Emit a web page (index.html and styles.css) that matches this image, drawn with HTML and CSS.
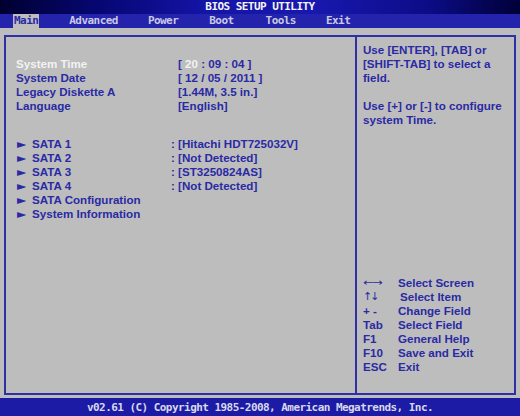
FILE: index.html
```html
<!DOCTYPE html>
<html>
<head>
<meta charset="utf-8">
<link rel="stylesheet" href="styles.css">
</head>
<body>
<div class="screen">
  <header class="title">BIOS SETUP UTILITY</header>
  <nav class="menu">
    <span class="tab tab-main active">Main</span>
    <span class="tab tab-adv">Advanced</span>
    <span class="tab tab-power">Power</span>
    <span class="tab tab-boot">Boot</span>
    <span class="tab tab-tools">Tools</span>
    <span class="tab tab-exit">Exit</span>
  </nav>
  <main class="area">
    <div class="box">
      <section class="left">
        <div class="group">
          <div class="row"><span class="label white">System Time</span><span class="val">[ <span class="white">20</span> : 09 : 04 ]</span></div>
          <div class="row"><span class="label">System Date</span><span class="val">[ 12 / 05 / 2011 ]</span></div>
          <div class="row"><span class="label">Legacy Diskette A</span><span class="val">[1.44M, 3.5 in.]</span></div>
          <div class="row"><span class="label">Language</span><span class="val">[English]</span></div>
        </div>
        <div class="group group2">
          <div class="row"><span class="label2"><span class="arr">►</span>SATA 1</span><span class="val">: [Hitachi HDT725032V]</span></div>
          <div class="row"><span class="label2"><span class="arr">►</span>SATA 2</span><span class="val">: [Not Detected]</span></div>
          <div class="row"><span class="label2"><span class="arr">►</span>SATA 3</span><span class="val">: [ST3250824AS]</span></div>
          <div class="row"><span class="label2"><span class="arr">►</span>SATA 4</span><span class="val">: [Not Detected]</span></div>
          <div class="row"><span class="label2"><span class="arr">►</span>SATA Configuration</span></div>
          <div class="row"><span class="label2"><span class="arr">►</span>System Information</span></div>
        </div>
      </section>
      <aside class="right">
        <div class="help">
          <p>Use [ENTER], [TAB] or<br>[SHIFT-TAB] to select a<br>field.</p>
          <p>Use [+] or [-] to configure<br>system Time.</p>
        </div>
        <div class="legend">
          <div class="lrow"><span class="key arrows">←→</span><span>Select Screen</span></div>
          <div class="lrow"><span class="key arrows2">↑↓</span><span class="ind">Select Item</span></div>
          <div class="lrow"><span class="key">+ -</span><span>Change Field</span></div>
          <div class="lrow"><span class="key">Tab</span><span>Select Field</span></div>
          <div class="lrow"><span class="key">F1</span><span>General Help</span></div>
          <div class="lrow"><span class="key">F10</span><span>Save and Exit</span></div>
          <div class="lrow"><span class="key">ESC</span><span>Exit</span></div>
        </div>
      </aside>
    </div>
  </main>
  <footer class="foot">v02.61 (C) Copyright 1985-2008, American Megatrends, Inc.</footer>
</div>
</body>
</html>
```
FILE: styles.css
```css
html, body {
  margin: 0;
  padding: 0;
  background: #bdbdbd;
}
.screen {
  width: 520px;
  height: 416px;
  display: flex;
  flex-direction: column;
  overflow: hidden;
}
.title {
  height: 14px;
  line-height: 14px;
  text-align: center;
  color: #f4f4f4;
  font-family: "DejaVu Sans Mono", monospace;
  font-weight: bold;
  font-size: 11px;
  letter-spacing: -0.55px;
  background: linear-gradient(to right, #000030 0%, #060670 18%, #1414a8 40%, #1818b0 60%, #0c0c88 82%, #000038 100%);
}
.menu {
  height: 14px;
  background: #2323ab;
  display: flex;
  font-family: "DejaVu Sans Mono", monospace;
  font-weight: bold;
  font-size: 11px;
  letter-spacing: -0.55px;
  line-height: 14px;
  color: #c9c9e6;
}
.tab { display: block; }
.tab-main { margin-left: 13px; padding: 0 1px; }
.tab-adv { margin-left: 30px; }
.tab-power { margin-left: 30px; }
.tab-boot { margin-left: 31px; }
.tab-tools { margin-left: 32px; }
.tab-exit { margin-left: 30px; }
.tab.active {
  background: #bdbdbd;
  color: #2a2aa6;
}
.area {
  flex: 1;
  padding: 7px 4px 3px 4px;
  display: flex;
}
.box {
  flex: 1;
  border: 2px solid #2f2fa6;
  display: flex;
  font-family: "Liberation Sans", Arial, sans-serif;
  font-weight: bold;
  font-size: 11.6px;
  line-height: 14px;
  color: #2a2aa4;
}
.left {
  width: 351px;
  border-right: 2px solid #2f2fa6;
  padding: 20px 0 0 10px;
  box-sizing: border-box;
}
.group2 { margin-top: 24px; }
.row {
  display: flex;
  height: 14px;
}
.label { width: 162px; }
.label2 { width: 155px; display: flex; }
.arr {
  width: 16px;
  font-family: "DejaVu Sans", sans-serif;
  font-size: 12px;
  padding-left: 1px;
  box-sizing: border-box;
}
.white { color: #f2f2f2; }
.right {
  flex: 1;
  padding: 6px 0 19px 6px;
  display: flex;
  flex-direction: column;
}
.help p { margin: 0 0 14px 0; }
.legend { margin-top: auto; }
.lrow { display: flex; height: 14px; }
.key { width: 35px; }
.arrows {
  font-family: "DejaVu Sans", sans-serif;
  font-weight: normal;
  font-size: 10px;
  letter-spacing: -1px;
  transform: scaleX(1.25);
  transform-origin: left center;
}
.arrows2 {
  font-family: "DejaVu Sans", sans-serif;
  font-weight: normal;
  font-size: 11px;
  letter-spacing: -2px;
}
.ind { padding-left: 2px; }
.foot {
  height: 18px;
  line-height: 20px;
  background: #1b1ba6;
  color: #d8d8ea;
  text-align: center;
  font-family: "DejaVu Sans Mono", monospace;
  font-weight: bold;
  font-size: 11px;
  letter-spacing: -0.55px;
}
```
